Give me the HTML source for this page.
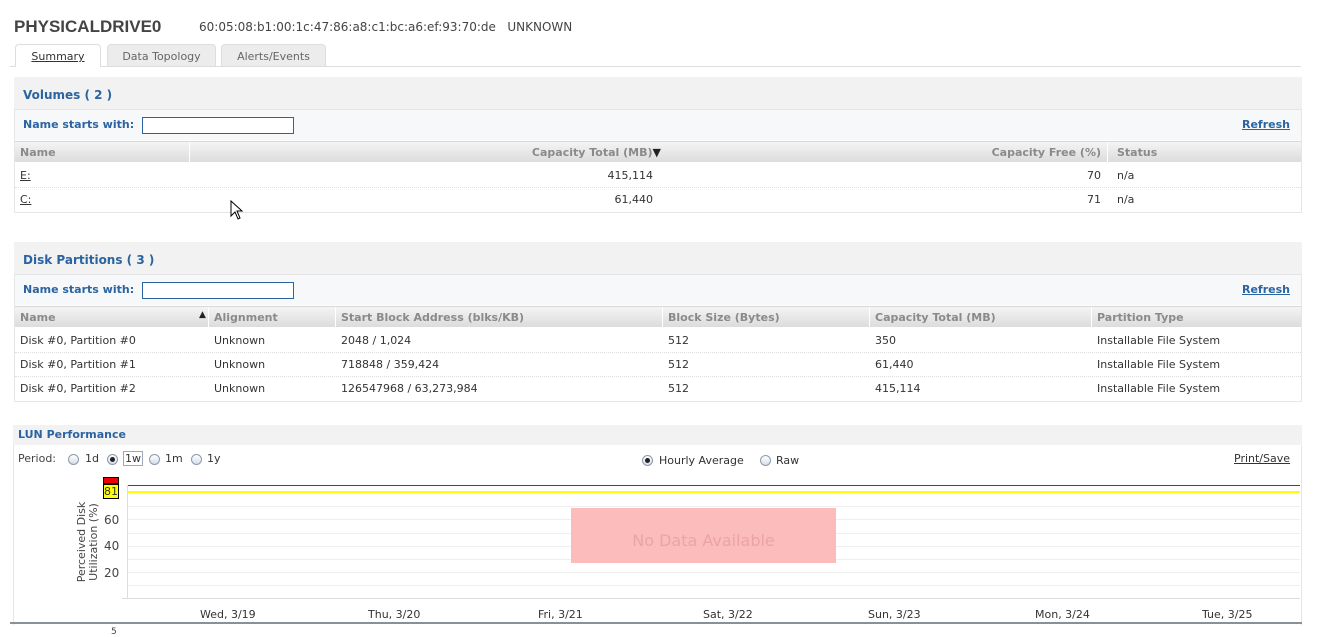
<!DOCTYPE html><html><head><style>
*{margin:0;padding:0;box-sizing:border-box}
body{width:1319px;height:635px;overflow:hidden;background:#fff;font-family:Tahoma,"DejaVu Sans","Liberation Sans",sans-serif;font-size:11px;color:#333;position:relative}
.a{position:absolute;white-space:nowrap}
.hd{background:#f2f2f2}
.bt{color:#2b64a0;font-weight:bold;font-size:12px}
.fl{background:#f6f8fa;border-top:1px solid #e4e4e4}
.th{background:linear-gradient(#f4f4f4,#dcdcdc);border-top:1px solid #d8d8d8;color:#8a8a8a;font-weight:bold}
.sep{position:absolute;top:0;width:1px;height:21px;background:#fff}
.row{border-bottom:1px dotted #ddd}
.lnk{color:#2b64a0;font-weight:bold;text-decoration:underline}
.rad{position:absolute;width:11px;height:11px;border:1px solid #8a9ab0;border-radius:50%;background:linear-gradient(#fff,#d8dde4)}
.rad.on::after{content:"";position:absolute;left:2px;top:2px;width:5px;height:5px;border-radius:50%;background:#222}
.gl{position:absolute;left:127px;width:1173px;height:1px;background:#eee}
</style></head><body>
<div class="a" style="left:14px;top:17px;font-size:17px;font-weight:bold;color:#444;font-family:'Liberation Sans',sans-serif">PHYSICALDRIVE0</div>
<div class="a" style="left:199px;top:20px;font-size:12px;color:#444">60:05:08:b1:00:1c:47:86:a8:c1:bc:a6:ef:93:70:de&nbsp;&nbsp;&nbsp;UNKNOWN</div>
<div class="a" style="left:10px;top:66px;width:1291px;height:1px;background:#ddd"></div>
<div class="a" style="left:15px;top:44px;width:86px;height:23px;border:1px solid #ddd;border-bottom:none;border-radius:4px 4px 0 0;background:#fff;text-align:center;padding-top:5px;text-decoration:underline;color:#333">Summary</div>
<div class="a" style="left:107px;top:44px;width:109px;height:22px;border:1px solid #ddd;border-bottom:none;border-radius:4px 4px 0 0;background:#ececec;text-align:center;padding-top:5px;color:#666">Data Topology</div>
<div class="a" style="left:221px;top:44px;width:105px;height:22px;border:1px solid #ddd;border-bottom:none;border-radius:4px 4px 0 0;background:#ececec;text-align:center;padding-top:5px;color:#666">Alerts/Events</div>

<div class="a" style="left:14px;top:77px;width:1288px;height:136px;border:1px solid #e6e6e6"></div>
<div class="a hd" style="left:14px;top:77px;width:1288px;height:32px"></div>
<div class="a bt" style="left:23px;top:88px">Volumes ( 2 )</div>
<div class="a fl" style="left:15px;top:109px;width:1286px;height:31px"></div>
<div class="a bt" style="left:23px;top:118px;font-size:11px">Name starts with:</div>
<div class="a" style="left:142px;top:117px;width:152px;height:17px;border:1px solid #2b64a0;background:#fff"></div>
<div class="a lnk" style="left:1242px;top:118px">Refresh</div>
<div class="a th" style="left:15px;top:141px;width:1286px;height:21px">
<div class="sep" style="left:174px"></div><div class="sep" style="left:1092px"></div>
<span class="a" style="left:5px;top:4px">Name</span>
<span class="a" style="right:640px;top:4px">Capacity Total (MB)<span style="color:#222">&#9660;</span></span>
<span class="a" style="right:200px;top:4px">Capacity Free (%)</span>
<span class="a" style="left:1102px;top:4px">Status</span></div>
<div class="a row" style="left:15px;top:163px;width:1286px;height:25px">
<span class="a" style="left:5px;top:6px;text-decoration:underline">E:</span><span class="a" style="right:648px;top:6px">415,114</span><span class="a" style="right:200px;top:6px">70</span><span class="a" style="left:1102px;top:6px">n/a</span></div>
<div class="a" style="left:15px;top:188px;width:1286px;height:24px">
<span class="a" style="left:5px;top:5px;text-decoration:underline">C:</span><span class="a" style="right:648px;top:5px">61,440</span><span class="a" style="right:200px;top:5px">71</span><span class="a" style="left:1102px;top:5px">n/a</span></div>
<svg class="a" style="left:230px;top:200px" width="14" height="22"><path d="M1 1 L1 16 L5 12 L8 19 L10 18 L7 11 L12 11 Z" fill="#fff" stroke="#000"/></svg>

<div class="a" style="left:14px;top:242px;width:1288px;height:160px;border:1px solid #e6e6e6"></div>
<div class="a hd" style="left:14px;top:242px;width:1288px;height:32px"></div>
<div class="a bt" style="left:23px;top:253px">Disk Partitions ( 3 )</div>
<div class="a fl" style="left:15px;top:274px;width:1286px;height:31px"></div>
<div class="a bt" style="left:23px;top:283px;font-size:11px">Name starts with:</div>
<div class="a" style="left:142px;top:282px;width:152px;height:17px;border:1px solid #2b64a0;background:#fff"></div>
<div class="a lnk" style="left:1242px;top:283px">Refresh</div>
<div class="a th" style="left:15px;top:306px;width:1286px;height:21px">
<div class="sep" style="left:193px"></div><div class="sep" style="left:320px"></div><div class="sep" style="left:647px"></div><div class="sep" style="left:854px"></div><div class="sep" style="left:1076px"></div>
<span class="a" style="left:5px;top:4px">Name</span><span class="a" style="left:184px;top:3px;color:#222;font-size:9px">&#9650;</span>
<span class="a" style="left:199px;top:4px">Alignment</span><span class="a" style="left:326px;top:4px">Start Block Address (blks/KB)</span>
<span class="a" style="left:653px;top:4px">Block Size (Bytes)</span><span class="a" style="left:860px;top:4px">Capacity Total (MB)</span><span class="a" style="left:1082px;top:4px">Partition Type</span></div>
<div class="a row" style="left:15px;top:329px;width:1286px;height:24px"><span class="a" style="left:5px;top:5px">Disk #0, Partition #0</span><span class="a" style="left:199px;top:5px">Unknown</span><span class="a" style="left:326px;top:5px">2048 / 1,024</span><span class="a" style="left:653px;top:5px">512</span><span class="a" style="left:860px;top:5px">350</span><span class="a" style="left:1082px;top:5px">Installable File System</span></div>
<div class="a row" style="left:15px;top:353px;width:1286px;height:24px"><span class="a" style="left:5px;top:5px">Disk #0, Partition #1</span><span class="a" style="left:199px;top:5px">Unknown</span><span class="a" style="left:326px;top:5px">718848 / 359,424</span><span class="a" style="left:653px;top:5px">512</span><span class="a" style="left:860px;top:5px">61,440</span><span class="a" style="left:1082px;top:5px">Installable File System</span></div>
<div class="a" style="left:15px;top:377px;width:1286px;height:24px"><span class="a" style="left:5px;top:5px">Disk #0, Partition #2</span><span class="a" style="left:199px;top:5px">Unknown</span><span class="a" style="left:326px;top:5px">126547968 / 63,273,984</span><span class="a" style="left:653px;top:5px">512</span><span class="a" style="left:860px;top:5px">415,114</span><span class="a" style="left:1082px;top:5px">Installable File System</span></div>

<div class="a" style="left:13px;top:425px;width:1289px;height:200px;border-left:1px solid #e6e6e6;border-right:1px solid #e6e6e6"></div>
<div class="a hd" style="left:13px;top:425px;width:1289px;height:20px"></div>
<div class="a bt" style="left:18px;top:428px;font-size:11px">LUN Performance</div>
<div class="a" style="left:18px;top:452px;color:#444">Period:</div>
<div class="rad" style="left:68px;top:454px"></div><div class="a" style="left:85px;top:452px">1d</div>
<div class="rad on" style="left:107px;top:454px"></div><div class="a" style="left:123px;top:451px;border:1px solid #9ab;padding:0 1px">1w</div>
<div class="rad" style="left:149px;top:454px"></div><div class="a" style="left:165px;top:452px">1m</div>
<div class="rad" style="left:191px;top:454px"></div><div class="a" style="left:207px;top:452px">1y</div>
<div class="rad on" style="left:642px;top:455px"></div><div class="a" style="left:659px;top:454px">Hourly Average</div>
<div class="rad" style="left:760px;top:455px"></div><div class="a" style="left:776px;top:454px">Raw</div>
<div class="a" style="left:1234px;top:452px;text-decoration:underline">Print/Save</div>
<div class="gl" style="top:506px"></div><div class="gl" style="top:519px"></div><div class="gl" style="top:533px"></div><div class="gl" style="top:546px"></div><div class="gl" style="top:559px"></div><div class="gl" style="top:572px"></div><div class="gl" style="top:585px"></div>
<div class="a" style="left:127px;top:485px;width:1173px;height:1px;background:#e00"></div>
<div class="a" style="left:127px;top:491px;width:1173px;height:2px;background:#ff0"></div>
<div class="a" style="left:127px;top:485px;width:1px;height:113px;background:#ddd"></div>
<div class="a" style="left:122px;top:598px;width:1178px;height:1px;background:#ddd"></div>
<div class="a" style="left:103px;top:477px;width:16px;height:7px;background:#e00;border:1px solid #000"></div>
<div class="a" style="left:103px;top:484px;width:16px;height:15px;background:#ff0;border:1px solid #000;font-size:11px;line-height:13px;text-align:center">81</div>
<div class="a" style="left:104px;top:513px;font-size:12px;color:#444">60</div>
<div class="a" style="left:104px;top:539px;font-size:12px;color:#444">40</div>
<div class="a" style="left:104px;top:566px;font-size:12px;color:#444">20</div>
<div class="a" style="left:38px;top:530px;transform:rotate(-90deg);font-size:11px;line-height:12px;color:#444;text-align:center;width:100px">Perceived Disk<br>Utilization (%)</div>
<div class="a" style="left:200px;top:608px">Wed, 3/19</div>
<div class="a" style="left:368px;top:608px">Thu, 3/20</div>
<div class="a" style="left:538px;top:608px">Fri, 3/21</div>
<div class="a" style="left:703px;top:608px">Sat, 3/22</div>
<div class="a" style="left:868px;top:608px">Sun, 3/23</div>
<div class="a" style="left:1035px;top:608px">Mon, 3/24</div>
<div class="a" style="left:1202px;top:608px">Tue, 3/25</div>
<div class="a" style="left:571px;top:508px;width:265px;height:55px;background:#fcbcbc;color:#eaa4a4;font-size:16px;text-align:center;line-height:66px">No Data Available</div>
<div class="a" style="left:10px;top:622px;width:1292px;height:2px;background:#8a9098"></div>
<div class="a" style="left:111px;top:627px;font-size:9px;color:#444">5</div>
</body></html>
